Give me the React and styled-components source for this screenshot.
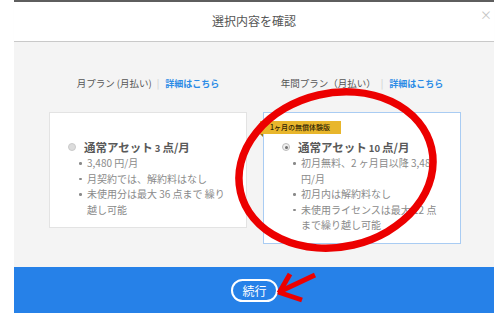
import React from "react";
import styled, { createGlobalStyle, css } from "styled-components";

const Global = createGlobalStyle`
  * { box-sizing: border-box; }
  html, body { margin: 0; padding: 0; background: #ffffff; }
  body { font-family: "Noto Sans CJK JP", "Noto Sans", sans-serif; }
`;

const Page = styled.div`
  position: relative;
  width: 500px;
  height: 328px;
  padding: 0 6px 0 14px;
  background: #ffffff;
  overflow: hidden;
`;

const Modal = styled.div`
  width: 480px;
  border-top: 2px solid #5e5e5e;
  background: #ffffff;
`;

const Header = styled.div`
  display: grid;
  grid-template-columns: 1fr auto 1fr;
  height: 40px;
  border-bottom: 1px solid #c9c9c9;
  box-shadow: 0 1px 1px rgba(0, 0, 0, 0.04);
`;

const Title = styled.h1`
  grid-column: 2;
  margin: 0;
  align-self: center;
  font-size: 12px;
  font-weight: 400;
  color: #555555;
  line-height: 16px;
  padding-bottom: 2px;
`;

const Close = styled.span`
  grid-column: 3;
  justify-self: end;
  align-self: start;
  margin: 7px 2px 0 0;
  font-size: 12px;
  line-height: 12px;
  color: #c4c4c4;
`;

const Body = styled.div`
  display: grid;
  grid-template-columns: 198px 198px;
  column-gap: 16px;
  align-items: start;
  height: 225px;
  padding: 34px 33px 0 35px;
  background: #f4f4f4;
`;

const Column = styled.div`
  display: flex;
  flex-direction: column;
  align-items: center;
`;

const PlanHeading = styled.div`
  display: flex;
  align-items: center;
  height: 14px;
  margin-bottom: 22px;
  font-size: 9.5px;
  color: #555555;
  white-space: nowrap;
`;

const Divider = styled.span`
  margin: 0 6px 0 5px;
  color: #cccccc;
`;

const DetailLink = styled.a`
  color: #2b8be6;
  font-weight: 700;
  text-decoration: none;
  font-size: 9px;
`;

const Card = styled.div`
  position: relative;
  width: 100%;
  background: #ffffff;
  border: 1px solid ${(p) => (p.$selected ? "#a9ccf3" : "#e3e3e3")};
  padding: 26px 0 10px 18px;
`;

const Badge = styled.div`
  position: absolute;
  top: 8px;
  left: -4px;
  height: 13px;
  padding: 0 11px 0 10px;
  background: #e8b62c;
  color: #2e2204;
  font-size: 7px;
  font-weight: 500;
  line-height: 13px;
  white-space: nowrap;
  &::after {
    content: "";
    position: absolute;
    left: 0;
    bottom: -3px;
    border-top: 3px solid #9c7612;
    border-left: 3px solid transparent;
  }
`;

const TitleRow = styled.div`
  display: flex;
  align-items: center;
  gap: 8px;
  height: 16px;
  font-size: 11.5px;
  font-weight: 700;
  color: #595959;
  white-space: nowrap;
`;

const Radio = styled.span`
  position: relative;
  width: 8px;
  height: 8px;
  border-radius: 50%;
  flex: none;
  ${(p) =>
    p.$checked
      ? css`
          background: #efefef;
          border: 1px solid #bdbdbd;
          &::after {
            content: "";
            position: absolute;
            left: 1.5px;
            top: 1.5px;
            width: 3px;
            height: 3px;
            border-radius: 50%;
            background: #707070;
          }
        `
      : css`
          background: #dcdcdc;
          border: 1px solid #cacaca;
        `}
`;

const Small = styled.span`
  font-size: 9.5px;
  font-weight: 600;
  margin: 0 2px;
`;

const List = styled.ul`
  margin: 0;
  padding: 0 0 0 11px;
  list-style: none;
`;

const Item = styled.li`
  position: relative;
  padding-left: 8px;
  font-size: 10px;
  line-height: 15.5px;
  color: #8a8a8a;
  white-space: nowrap;
  &::before {
    content: "";
    position: absolute;
    left: 0;
    top: 7px;
    width: 2.5px;
    height: 2.5px;
    border-radius: 50%;
    background: #8a8a8a;
  }
`;

const Footer = styled.div`
  display: flex;
  align-items: center;
  justify-content: center;
  height: 46px;
  background: #2681e8;
  padding-left: 1px;
`;

const ContinueButton = styled.button`
  width: 47px;
  height: 23px;
  padding: 0;
  border: 2px solid #ffffff;
  border-radius: 12px;
  background: transparent;
  color: #ffffff;
  font-family: inherit;
  font-size: 12px;
  line-height: 17px;
`;

const Annotation = styled.svg`
  position: absolute;
  left: 0;
  top: 0;
  pointer-events: none;
`;

const plans = [
  {
    heading: "月プラン (月払い)",
    title: "通常アセット",
    count: "3",
    selected: false,
    items: [
      ["3,480 円/月"],
      ["月契約では、解約料はなし"],
      ["未使用分は最大 36 点まで 繰り", "越し可能"],
    ],
  },
  {
    heading: "年間プラン（月払い）",
    title: "通常アセット",
    count: "10",
    selected: true,
    badge: "1ヶ月の無償体験版",
    items: [
      ["初月無料、2 ヶ月目以降 3,480", "円/月"],
      ["初月内は解約料なし"],
      ["未使用ライセンスは最大 12 点", "まで繰り越し可能"],
    ],
  },
];

export default function App() {
  return (
    <>
      <Global />
      <Page>
        <Modal>
          <Header>
            <Title>選択内容を確認</Title>
            <Close>×</Close>
          </Header>
          <Body>
            {plans.map((plan) => (
              <Column key={plan.heading}>
                <PlanHeading>
                  {plan.heading}
                  <Divider>|</Divider>
                  <DetailLink href="#">詳細はこちら</DetailLink>
                </PlanHeading>
                <Card $selected={plan.selected}>
                  {plan.badge && <Badge>{plan.badge}</Badge>}
                  <TitleRow>
                    <Radio $checked={plan.selected} />
                    <span>
                      {plan.title}
                      <Small>{plan.count}</Small>
                      点/月
                    </span>
                  </TitleRow>
                  <List>
                    {plan.items.map((lines, i) => (
                      <Item key={i}>
                        {lines.map((l, j) => (
                          <React.Fragment key={j}>
                            {j > 0 && <br />}
                            {l}
                          </React.Fragment>
                        ))}
                      </Item>
                    ))}
                  </List>
                </Card>
              </Column>
            ))}
          </Body>
          <Footer>
            <ContinueButton>続行</ContinueButton>
          </Footer>
        </Modal>
        <Annotation width="500" height="328" viewBox="0 0 500 328">
          <ellipse
            cx="336"
            cy="170"
            rx="98"
            ry="77"
            transform="rotate(-13 336 170)"
            fill="none"
            stroke="#ec0000"
            strokeWidth="7.5"
          />
          <g stroke="#ec0000" strokeWidth="5" strokeLinecap="butt" fill="none">
            <line x1="315" y1="275" x2="281" y2="291" />
            <line x1="279" y1="293" x2="290" y2="274" />
            <line x1="278" y1="292" x2="302" y2="300" />
          </g>
        </Annotation>
      </Page>
    </>
  );
}
